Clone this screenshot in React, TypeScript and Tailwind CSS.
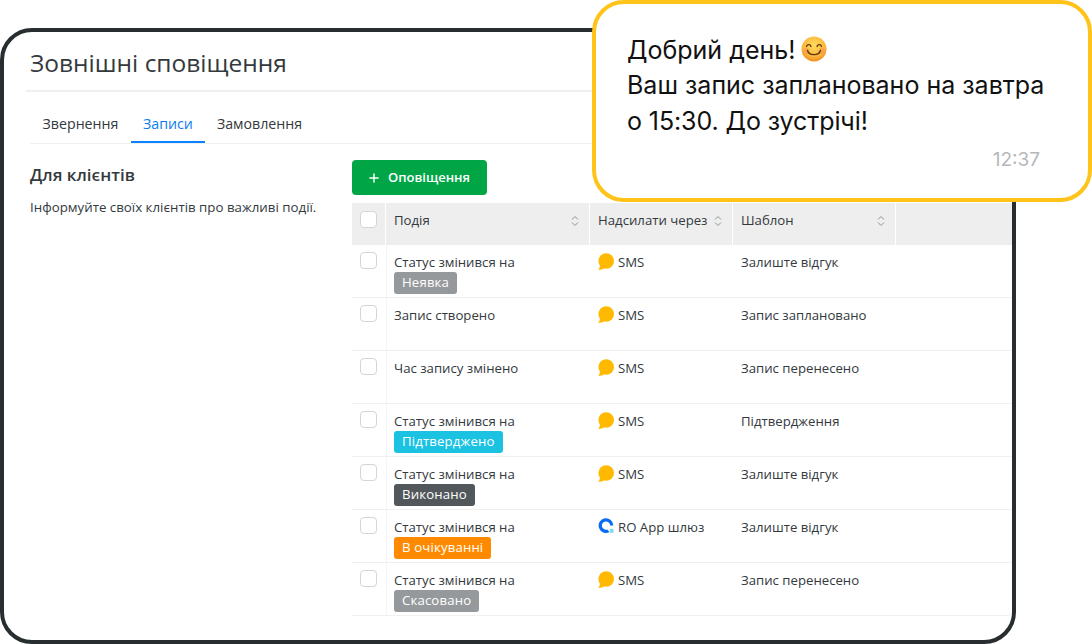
import { Plus } from "lucide-react";

const rows = [
  { event: "Статус змінився на", badge: "Неявка", badgeClass: "bg-[#96999c]", via: "SMS", template: "Залиште відгук" },
  { event: "Запис створено", via: "SMS", template: "Запис заплановано" },
  { event: "Час запису змінено", via: "SMS", template: "Запис перенесено" },
  { event: "Статус змінився на", badge: "Підтверджено", badgeClass: "bg-[#1cc2e2]", via: "SMS", template: "Підтвердження" },
  { event: "Статус змінився на", badge: "Виконано", badgeClass: "bg-[#52575b]", via: "SMS", template: "Залиште відгук" },
  { event: "Статус змінився на", badge: "В очікуванні", badgeClass: "bg-[#ff8a00]", via: "RO App шлюз", template: "Залиште відгук" },
  { event: "Статус змінився на", badge: "Скасовано", badgeClass: "bg-[#96999c]", via: "SMS", template: "Запис перенесено" },
];

function SortIcon() {
  return (
    <svg width="8" height="12" viewBox="0 0 8 12" fill="none" stroke="#8d9296" strokeWidth="1">
      <path d="M1 4.500 4 1.500l3 3M1 7.500l3 3 3-3" />
    </svg>
  );
}

function Checkbox() {
  return <div className="h-[17px] w-[17px] shrink-0 rounded-[4px] border border-[#d3d5d7] bg-white" />;
}

function SmsIcon() {
  return (
    <svg width="16" height="17" viewBox="0 0 16 17" className="mr-[1px] shrink-0">
      <circle cx="8.200" cy="8" r="7.800" fill="#ffb900" />
      <path d="M0.200 16.800c2 .2 4.400-.3 5.800-1.600L1.900 11.500c.2 2-.4 4-1.700 5.300z" fill="#ffb900" />
    </svg>
  );
}

function GatewayIcon() {
  return (
    <svg width="17" height="17" viewBox="0 0 17 17" className="-mt-[1px] shrink-0">
      <path d="M11.500 15.100A7.400 7.400 0 1 1 15.400 8.500h-3.300A4.100 4.100 0 1 0 9.300 12.400z" fill="#0a6cf0" />
      <rect x="11.800" y="12" width="3.800" height="3.800" fill="#7fdcf5" />
    </svg>
  );
}

function SmileEmoji() {
  return (
    <svg width="26" height="26" viewBox="0 0 26 26" className="my-[-6px] ml-[6px] inline-block align-[3px]">
      <defs>
        <radialGradient id="face" cx="50%" cy="35%" r="65%">
          <stop offset="0%" stopColor="#ffdc5e" />
          <stop offset="70%" stopColor="#fbb53a" />
          <stop offset="100%" stopColor="#f08c1e" />
        </radialGradient>
      </defs>
      <circle cx="13" cy="13" r="12.500" fill="url(#face)" />
      <circle cx="5.500" cy="15" r="3" fill="#f58a5a" opacity="0.45" />
      <circle cx="20.500" cy="15" r="3" fill="#f58a5a" opacity="0.45" />
      <path d="M5.500 10.500c.8-2.400 3.700-2.400 4.500 0M16 10.500c.8-2.400 3.700-2.400 4.500 0" fill="none" stroke="#5b3410" strokeWidth="1.300" strokeLinecap="round" />
      <path d="M6.500 14.500c1.500 5.500 11.500 5.500 13 0" fill="none" stroke="#5b3410" strokeWidth="1.300" strokeLinecap="round" />
    </svg>
  );
}

export default function App() {
  return (
    <div className="relative h-[644px] w-[1092px] overflow-hidden bg-white font-['Open_Sans',sans-serif] text-[#33393d]">
      <div className="mt-[28px] h-[616px] w-[1016px] overflow-hidden rounded-[32px] border-4 border-[#282d30] bg-white">
        <div className="ml-[22px] flex h-[60px] items-center border-b-2 border-[#f0f0f0] pl-[4px] pt-[5px] text-[24.500px] leading-none">
          Зовнішні сповіщення
        </div>
        <div className="ml-[26px] mt-[10px] flex h-[42px] border-b border-[#f0f0f0] text-[14.200px]">
          <div className="flex w-[101px] items-center justify-center pt-[3px]">Звернення</div>
          <div className="flex w-[74px] items-center justify-center border-b-2 border-[#0a84ff] pt-[5px] text-[#0a7cf0]">Записи</div>
          <div className="flex w-[110px] items-center justify-center pr-[1px] pt-[3px]">Замовлення</div>
        </div>
        <div className="ml-[26px] flex">
          <div className="w-[322px] shrink-0 pt-[19px]">
            <div className="text-[17px] font-semibold leading-[24px]">Для клієнтів</div>
            <div className="mt-[11px] text-[13.300px] leading-[18px]">Інформуйте своїх клієнтів про важливі події.</div>
          </div>
          <div className="flex-1">
            <button className="mt-[16px] flex h-[35px] w-[135px] items-center justify-center gap-[7px] rounded-[4px] bg-[#00a646] pr-[2px] text-[13px] font-semibold text-white">
              <Plus size={14} strokeWidth={2.500} />
              Оповіщення
            </button>
            <div className="mt-[8px] flex h-[42px] gap-[1px] text-[13.200px]">
              <div className="flex w-[33px] items-start bg-[#eeeeee] pl-[8px] pt-[8px]"><Checkbox /></div>
              <div className="flex w-[203px] items-center justify-between bg-[#eeeeee] pb-[6px] pl-[8px] pr-[10px]">Подія<SortIcon /></div>
              <div className="flex w-[142px] items-center justify-between bg-[#eeeeee] pb-[6px] pl-[8px] pr-[10px]">Надсилати через<SortIcon /></div>
              <div className="flex w-[162px] items-center justify-between bg-[#eeeeee] pb-[6px] pl-[8px] pr-[10px]">Шаблон<SortIcon /></div>
              <div className="flex-1 bg-[#eeeeee]" />
            </div>
            {rows.map((row, i) => (
              <div key={i} className="flex h-[53px] gap-[1px] border-b border-[#f0f0f0] text-[13.200px] leading-[18px]">
                <div className="w-[33px] pl-[8px] pt-[7px]"><Checkbox /></div>
                <div className="w-[203px] border-l border-[#f5f5f5] pl-[7px] pt-[8px]">
                  <div>{row.event}</div>
                  {row.badge && (
                    <div className={`mt-[1px] inline-block h-[22px] rounded-[3px] px-[8px] text-[13.200px] leading-[21px] tracking-[0.15px] text-white ${row.badgeClass}`}>
                      {row.badge}
                    </div>
                  )}
                </div>
                <div className="flex w-[142px] items-start gap-[3px] pl-[8px] pt-[8px]">
                  {row.via === "SMS" ? <SmsIcon /> : <GatewayIcon />}
                  {row.via}
                </div>
                <div className="w-[162px] pl-[8px] pt-[8px]">{row.template}</div>
              </div>
            ))}
          </div>
        </div>
      </div>
      <div className="absolute left-[592px] top-0 h-[202px] w-[500px] rounded-[32px] border-4 border-[#ffc31a] bg-white pl-[31px] pt-[28px] font-['Inter',sans-serif] text-[25px] leading-[36px] text-[#111111]">
        <div className="h-[35px]">Добрий день!<SmileEmoji /></div>
        <div>Ваш запис заплановано на завтра</div>
        <div className="tracking-[-0.1px]">о 15:30. До зустрічі!</div>
        <div className="absolute right-[48px] top-[144px] text-[19px] leading-[24px] text-[#b5b8ba]">12:37</div>
      </div>
    </div>
  );
}
